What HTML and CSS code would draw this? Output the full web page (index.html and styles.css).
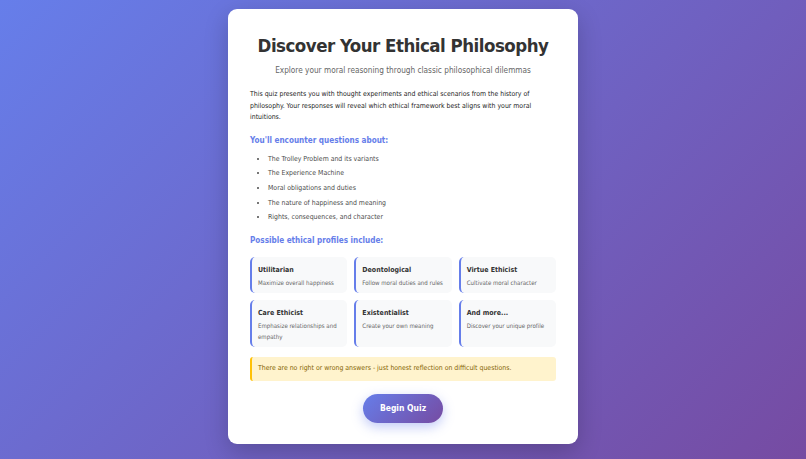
FILE: index.html
```html
<!DOCTYPE html>
<html lang="en">
<head>
<meta charset="utf-8">
<title>Discover Your Ethical Philosophy</title>
<link rel="stylesheet" href="styles.css">
</head>
<body>
<main class="card">
  <h1 class="title">Discover Your Ethical Philosophy</h1>
  <p class="subtitle">Explore your moral reasoning through classic philosophical dilemmas</p>
  <p class="intro">This quiz presents you with thought experiments and ethical scenarios from the history of philosophy. Your responses will reveal which ethical framework best aligns with your moral intuitions.</p>
  <h3 class="section">You'll encounter questions about:</h3>
  <ul class="topics">
    <li>The Trolley Problem and its variants</li>
    <li>The Experience Machine</li>
    <li>Moral obligations and duties</li>
    <li>The nature of happiness and meaning</li>
    <li>Rights, consequences, and character</li>
  </ul>
  <h3 class="section section-2">Possible ethical profiles include:</h3>
  <div class="profiles">
    <div class="profile"><div class="p-name">Utilitarian</div><div class="p-desc">Maximize overall happiness</div></div>
    <div class="profile"><div class="p-name">Deontological</div><div class="p-desc">Follow moral duties and rules</div></div>
    <div class="profile"><div class="p-name">Virtue Ethicist</div><div class="p-desc">Cultivate moral character</div></div>
    <div class="profile"><div class="p-name">Care Ethicist</div><div class="p-desc">Emphasize relationships and empathy</div></div>
    <div class="profile"><div class="p-name">Existentialist</div><div class="p-desc">Create your own meaning</div></div>
    <div class="profile"><div class="p-name">And more...</div><div class="p-desc">Discover your unique profile</div></div>
  </div>
  <div class="note">There are no right or wrong answers - just honest reflection on difficult questions.</div>
  <div class="actions"><button class="begin">Begin Quiz</button></div>
</main>
</body>
</html>
```
FILE: styles.css
```css
html, body {
  margin: 0;
  padding: 0;
  height: 100%;
}
body {
  background: linear-gradient(135deg, #667eea 0%, #764ba2 100%);
  font-family: "DejaVu Sans Condensed", "DejaVu Sans", sans-serif;
  font-stretch: condensed;
  color: #333;
  display: flex;
  justify-content: center;
  align-items: flex-start;
  padding-top: 9px;
  box-sizing: border-box;
}
.card {
  width: 350px;
  box-sizing: border-box;
  background: #fff;
  border-radius: 9px;
  padding: 25px 22px 21px;
  box-shadow: 0 8px 24px rgba(0, 0, 0, 0.2);
}
.title {
  margin: 0;
  font-size: 18.5px;
  letter-spacing: -0.5px;
  line-height: 24px;
  font-weight: bold;
  text-align: center;
  color: #333;
}
.subtitle {
  margin: 5px 0 0;
  font-size: 8.2px;
  line-height: 14px;
  text-align: center;
  color: #666;
}
.intro {
  margin: 12px 0 0;
  font-size: 6.9px;
  line-height: 11.5px;
  color: #222;
}
.section {
  margin: 10px 0 0;
  font-size: 8.1px;
  line-height: 13px;
  font-weight: bold;
  color: #667eea;
}
.section-2 {
  margin-top: 9px;
}
.topics {
  margin: 5px 0 0;
  padding-left: 18px;
  font-size: 6.9px;
  line-height: 14.7px;
  color: #4a4a4a;
}
.profiles {
  margin-top: 9.5px;
  display: grid;
  grid-template-columns: repeat(3, 1fr);
  gap: 7px;
}
.profile {
  background: #f8f9fa;
  border-left: 2px solid #667eea;
  border-radius: 5px;
  padding: 8px 6px 4.5px 6px;
}
.p-name {
  font-size: 7px;
  line-height: 11px;
  font-weight: bold;
  color: #333;
}
.p-desc {
  margin-top: 1.5px;
  font-size: 6.1px;
  line-height: 11px;
  color: #666;
}
.note {
  margin-top: 10px;
  background: #fff3cd;
  border-left: 2px solid #ffc107;
  border-radius: 3px;
  padding: 6.5px 6px;
  font-size: 6.9px;
  line-height: 11px;
  color: #856404;
}
.actions {
  margin-top: 13px;
  display: flex;
  justify-content: center;
}
.begin {
  width: 80px;
  height: 29px;
  border: none;
  border-radius: 15px;
  background: linear-gradient(135deg, #667eea 0%, #764ba2 100%);
  color: #fff;
  font-family: inherit;
  font-stretch: condensed;
  font-size: 8.5px;
  font-weight: bold;
  box-shadow: 0 4px 12px rgba(102, 126, 234, 0.4);
  cursor: pointer;
}
```
